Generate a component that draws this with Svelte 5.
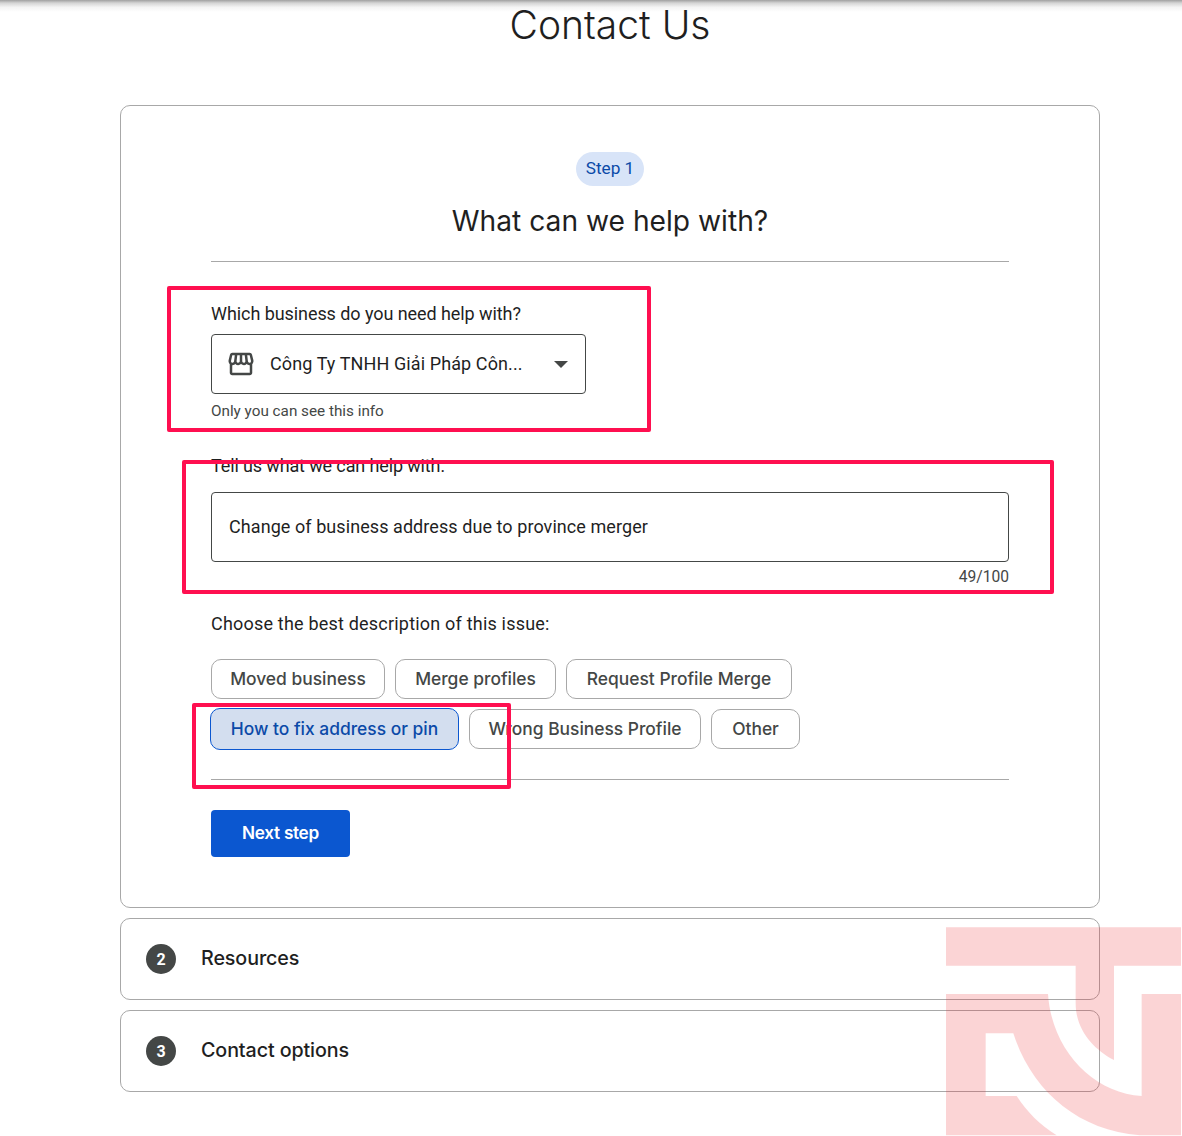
<script lang="ts">
  // chip widths are fixed, the Inter fallback runs a bit off the original's metrics
  const chipRows = [
    [
      { label: 'Moved business', width: 174 },
      { label: 'Merge profiles', width: 161 },
      { label: 'Request Profile Merge', width: 226 },
    ],
    [
      { label: 'How to fix address or pin', width: 249, selected: true },
      { label: 'Wrong Business Profile', width: 232 },
      { label: 'Other', width: 89 },
    ],
  ]

  const sections = [
    { num: 2, title: 'Resources' },
    { num: 3, title: 'Contact options' },
  ]
</script>

<div class="page">
  <div class="top-shadow"></div>
  <h1>Contact Us</h1>

  <div class="card step-card">
    <span class="pill">Step 1</span>
    <h2>What can we help with?</h2>
    <hr class="rule first" />

    <div class="label first-label">Which business do you need help with?</div>
    <div class="select">
      <svg class="store" viewBox="0 0 24 24" width="30" height="30" fill="#444746">
        <path d="M21.9 8.89l-1.05-4.37c-.22-.9-1-1.52-1.91-1.52H5.05c-.9 0-1.69.63-1.9 1.52L2.1 8.89c-.24 1.02-.02 2.06.62 2.88.08.11.19.19.28.29V19c0 1.1.9 2 2 2h14c1.1 0 2-.9 2-2v-6.94c.09-.09.2-.18.28-.28.64-.82.87-1.87.62-2.89zM18.91 4.99l1.05 4.37c.1.42.01.84-.25 1.17-.14.18-.44.47-.94.47-.61 0-1.14-.49-1.21-1.14L16.98 5l1.93-.01zM13 5h1.96l.54 4.52c.05.39-.07.78-.33 1.07-.22.26-.54.41-.95.41-.67 0-1.22-.59-1.22-1.31V5zM8.49 9.52L9.04 5H11v4.69c0 .72-.55 1.31-1.29 1.31-.34 0-.65-.15-.89-.41-.25-.29-.37-.68-.33-1.07zM4.04 9.36L5.05 5h1.97l-.58 4.86c-.08.65-.6 1.14-1.21 1.14-.49 0-.8-.29-.93-.47-.27-.32-.36-.75-.26-1.17zM5 19v-6.03c.08.01.15.03.23.03.87 0 1.66-.36 2.24-.95.6.6 1.4.95 2.31.95.87 0 1.65-.36 2.23-.93.59.57 1.39.93 2.29.93.84 0 1.64-.35 2.24-.95.58.59 1.37.95 2.24.95.08 0 .15-.02.23-.03V19H5z"/>
      </svg>
      <span class="select-text">Công Ty TNHH Giải Pháp Côn...</span>
      <span class="caret"></span>
    </div>
    <div class="helper">Only you can see this info</div>

    <div class="label second-label">Tell us what we can help with:</div>
    <div class="textbox">Change of business address due to province merger</div>
    <div class="counter">49/100</div>

    <div class="label third-label">Choose the best description of this issue:</div>
    <div class="chips">
      {#each chipRows as row}
        <div class="chip-row">
          {#each row as chip}
            <button class="chip" class:selected={chip.selected} style="width: {chip.width}px">{chip.label}</button>
          {/each}
        </div>
      {/each}
    </div>
    <hr class="rule second" />
    <button class="next">Next step</button>
  </div>

  {#each sections as s}
    <div class="card section">
      <span class="num">{s.num}</span>
      <span class="section-title">{s.title}</span>
    </div>
  {/each}

  <!-- annotations drawn over the screenshot -->
  <div class="mark mark-a"></div>
  <div class="mark mark-b"></div>
  <div class="mark mark-c"></div>

  <svg class="watermark" viewBox="138 82 705 625" width="235" height="209" fill="#f02c33">
    <path d="M138 82H843V197H642V480C575 445 527 385 527 310V197H138Z"/>
    <path fill-rule="evenodd" d="M138 282H444C455 450 580 580 725 588V282H843V706H720C530 690 395 570 340 400H257V588H350C380 635 420 675 470 706H138Z"/>
  </svg>
</div>

<style>
  :global(body) {
    margin: 0;
    background: #fff;
    font-family: Roboto, "Liberation Sans", sans-serif;
    color: #1f1f1f;
  }

  .page {
    position: relative;
    width: 1182px;
    height: 1136px;
    overflow: hidden;
    padding: 0 82px 0 120px;
    box-sizing: border-box;
  }

  .top-shadow {
    position: absolute;
    left: 0;
    right: 0;
    top: 0;
    height: 12px;
    background: linear-gradient(#a0a0a0, #d4d4d4 25%, #f4f4f4 60%, #fff);
  }

  h1 {
    position: relative;
    margin: 0;
    height: 105px;
    padding-top: 1px;
    box-sizing: border-box;
    text-align: center;
    font-family: Inter, sans-serif;
    font-weight: 300;
    font-size: 39px;
    line-height: 48px;
    color: #1f1f1f;
  }

  .card {
    border: 1px solid #a8a8a8;
    border-radius: 10px;
    box-sizing: border-box;
  }

  .step-card {
    height: 803px;
    padding: 46px 90px 0;
    display: flex;
    flex-direction: column;
    align-items: flex-start;
  }

  .pill {
    align-self: center;
    height: 34px;
    line-height: 32px;
    padding: 0 9.5px;
    border-radius: 17px;
    background: #d8e4f8;
    color: #0b4aa8;
    font-size: 17.2px;
  }

  h2 {
    align-self: center;
    margin: 17px 0 0;
    font-family: Inter, sans-serif;
    font-weight: 400;
    font-size: 28.2px;
    line-height: 36px;
  }

  .rule {
    width: 100%;
    margin: 0;
    border: 0;
    border-top: 1px solid #a8a8a8;
  }
  .rule.first { margin-top: 22px; }
  .rule.second { margin-top: 30px; }

  .label {
    font-size: 18px;
    line-height: 24px;
    color: #1f1f1f;
  }
  .first-label { margin-top: 40px; letter-spacing: -0.07px; }
  .second-label { margin-top: 34px; letter-spacing: -0.13px; }
  .third-label { margin-top: 26px; letter-spacing: 0.2px; }

  .select {
    margin-top: 8px;
    width: 375px;
    height: 60px;
    box-sizing: border-box;
    border: 1px solid #444746;
    border-radius: 4px;
    display: flex;
    align-items: center;
    padding: 0 16px 0 14px;
  }

  .store { flex: none; }

  .select-text {
    margin-left: 14px;
    flex: 1;
    padding-bottom: 2px;
    font-size: 18px;
    letter-spacing: 0.1px;
    white-space: nowrap;
  }

  .caret {
    width: 0;
    height: 0;
    border-left: 7px solid transparent;
    border-right: 7px solid transparent;
    border-top: 7px solid #444746;
    margin-right: 1px;
  }

  .helper {
    margin-top: 8px;
    font-size: 15.25px;
    line-height: 18px;
    color: #444746;
  }

  .textbox {
    margin-top: 14px;
    width: 100%;
    height: 70px;
    box-sizing: border-box;
    border: 1px solid #444746;
    border-radius: 4px;
    padding: 0 17px 2px;
    display: flex;
    align-items: center;
    font-size: 18px;
    letter-spacing: 0.07px;
  }

  .counter {
    align-self: flex-end;
    margin-top: 6px;
    font-size: 15.6px;
    line-height: 18px;
    color: #444746;
  }

  .chips {
    margin-top: 23px;
    display: flex;
    flex-direction: column;
    gap: 10px;
  }

  .chip-row {
    display: flex;
    align-items: center;
    gap: 10px;
    height: 40px;
  }

  .chip {
    height: 40px;
    padding: 0 0 2px;
    border: 1px solid #a8a8a8;
    border-radius: 10px;
    background: #fff;
    color: #444746;
    font-family: Inter, sans-serif;
    font-size: 17.4px;
    font-weight: 500;
  }

  .chip.selected {
    height: 42px;
    margin-left: -1px;
    background: #d3deef;
    border-color: #0b57d0;
    color: #0b4aa8;
  }

  .next {
    margin-top: 30px;
    width: 139px;
    height: 47px;
    padding: 0 0 2px;
    border: 0;
    border-radius: 4px;
    background: #0b57d0;
    color: #fff;
    font-family: Inter, sans-serif;
    font-size: 17.2px;
    font-weight: 600;
    letter-spacing: -0.3px;
  }

  .section {
    margin-top: 10px;
    height: 82px;
    display: flex;
    align-items: center;
    padding-left: 25px;
  }

  .num {
    width: 30px;
    height: 30px;
    border-radius: 50%;
    background: #444746;
    color: #fff;
    display: flex;
    align-items: center;
    justify-content: center;
    font-size: 16px;
    font-weight: 700;
  }

  .section-title {
    margin-left: 25px;
    font-family: Inter, sans-serif;
    font-size: 19.7px;
    font-weight: 500;
    line-height: 24px;
    padding-bottom: 2px;
    letter-spacing: -0.1px;
    color: #1f1f1f;
  }

  .mark {
    position: absolute;
    box-sizing: border-box;
    border: 4px solid #ff0f50;
    border-radius: 2px;
  }
  .mark-a { left: 167px; top: 286px; width: 484px; height: 146px; }
  .mark-b { left: 182px; top: 460px; width: 872px; height: 134px; }
  .mark-c { left: 192px; top: 703px; width: 319px; height: 86px; }

  .watermark {
    position: absolute;
    left: 946px;
    top: 927px;
    opacity: 0.2;
    pointer-events: none;
  }
</style>
